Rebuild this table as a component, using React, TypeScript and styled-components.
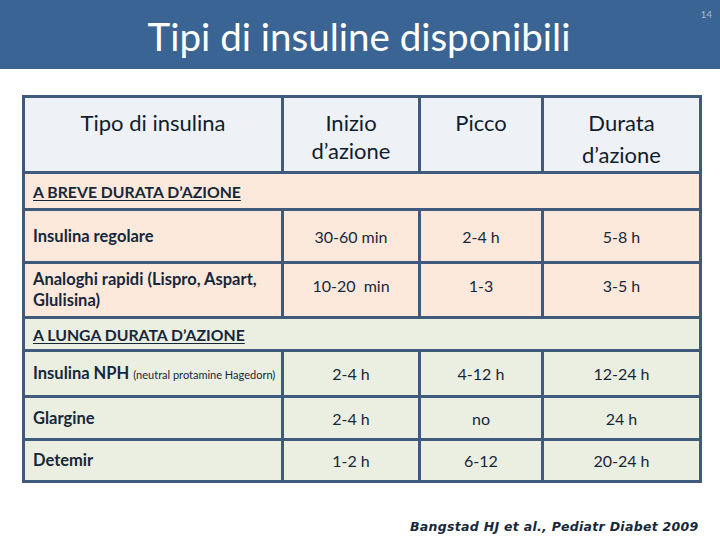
import React from "react";
import styled, { createGlobalStyle } from "styled-components";

const Global = createGlobalStyle`
  html, body { margin: 0; padding: 0; background: #ffffff; }
  body { font-family: Lato, "Open Sans", sans-serif; }
`;

const Page = styled.div`
  width: 720px;
  height: 540px;
  display: flex;
  flex-direction: column;
  background: #ffffff;
  overflow: hidden;
`;

const TitleBar = styled.header`
  position: relative;
  height: 69px;
  background: #3a6494;
  display: flex;
  align-items: center;
  justify-content: center;
`;

const Title = styled.h1`
  margin: 0;
  padding-right: 2px;
  padding-top: 2px;
  font-family: Lato, sans-serif;
  font-weight: 400;
  font-size: 38.5px;
  color: #ffffff;
`;

const SlideNo = styled.span`
  position: absolute;
  top: 8px;
  right: 8px;
  font-family: Lato, sans-serif;
  font-size: 10px;
  color: #a6b8cf;
`;

const TableWrap = styled.div`
  margin: 26px 0 0 22px;
`;

const Table = styled.table`
  width: 677px;
  border-collapse: collapse;
  table-layout: fixed;
  border: 3px solid #3f5a7a;
  color: #17273a;
`;

const HeadCell = styled.th<{ $lh?: number; $pt?: number }>`
  border: 3px solid #3f5a7a;
  background: #eef1f5;
  height: 60px;
  padding: ${(p) => p.$pt ?? 11}px 4px 0;
  vertical-align: top;
  font-family: Lato, sans-serif;
  font-weight: 400;
  font-size: 22px;
  line-height: ${(p) => p.$lh ?? 28}px;
  text-align: center;
  color: #111d2c;
`;

const Row = styled.tr<{ $tone: "peach" | "green"; $h: number }>`
  background: ${(p) => (p.$tone === "peach" ? "#fde9dc" : "#ebefe1")};
  height: ${(p) => p.$h}px;
`;

const SectionCell = styled.td`
  border: 3px solid #3f5a7a;
  padding: 0 8px;
  font-family: Lato, sans-serif;
  font-weight: 700;
  font-size: 15.8px;
  text-decoration: underline;
  text-underline-offset: 2px;
  vertical-align: middle;
`;

const NameCell = styled.td`
  border: 3px solid #3f5a7a;
  padding: 0 8px;
  font-family: Lato, sans-serif;
  font-weight: 700;
  font-size: 16.5px;
  line-height: 21px;
  vertical-align: middle;
  white-space: nowrap;
`;

const Wrap = styled.span`
  white-space: normal;
`;

const Small = styled.span`
  font-size: 11px;
  font-weight: 400;
`;

const ValueCell = styled.td<{ $pb?: number }>`
  border: 3px solid #3f5a7a;
  padding: 0 4px ${(p) => p.$pb ?? 0}px;
  font-family: Lato, sans-serif;
  font-weight: 400;
  font-size: 16px;
  text-align: center;
  vertical-align: middle;
  white-space: pre;
`;

const Citation = styled.p`
  margin: 36px 0 0 410px;
  font-family: "DejaVu Sans", sans-serif;
  font-weight: 700;
  font-style: italic;
  font-size: 12.5px;
  letter-spacing: 0.3px;
  color: #17273a;
`;

type DataRow = { name: React.ReactNode; vals: string[]; h: number; pb?: number };

const brief: DataRow[] = [
  { name: "Insulina regolare", vals: ["30-60 min", "2-4 h", "5-8 h"], h: 53 },
  {
    name: <Wrap>Analoghi rapidi (Lispro, Aspart, Glulisina)</Wrap>,
    vals: ["10-20  min", "1-3", "3-5 h"],
    h: 55,
    pb: 10,
  },
];

const long: DataRow[] = [
  {
    name: (
      <>
        Insulina NPH <Small>(neutral protamine Hagedorn)</Small>
      </>
    ),
    vals: ["2-4 h", "4-12 h", "12-24 h"],
    h: 46,
  },
  { name: "Glargine", vals: ["2-4 h", "no", "24 h"], h: 43 },
  { name: "Detemir", vals: ["1-2 h", "6-12", "20-24 h"], h: 42 },
];

const renderRows = (rows: DataRow[], tone: "peach" | "green") =>
  rows.map((r, i) => (
    <Row key={i} $tone={tone} $h={r.h}>
      <NameCell>{r.name}</NameCell>
      {r.vals.map((v, j) => (
        <ValueCell key={j} $pb={r.pb}>
          {v}
        </ValueCell>
      ))}
    </Row>
  ));

export default function App() {
  return (
    <Page>
      <Global />
      <TitleBar>
        <Title>Tipi di insuline disponibili</Title>
        <SlideNo>14</SlideNo>
      </TitleBar>
      <TableWrap>
        <Table>
          <colgroup>
            <col style={{ width: 259 }} />
            <col style={{ width: 137 }} />
            <col style={{ width: 123 }} />
            <col style={{ width: 158 }} />
          </colgroup>
          <thead>
            <tr>
              <HeadCell>Tipo di insulina</HeadCell>
              <HeadCell>
                Inizio
                <br />
                d’azione
              </HeadCell>
              <HeadCell>Picco</HeadCell>
              <HeadCell $lh={32} $pt={9}>
                Durata
                <br />
                d’azione
              </HeadCell>
            </tr>
          </thead>
          <tbody>
            <Row $tone="peach" $h={37}>
              <SectionCell colSpan={4}>A BREVE DURATA D’AZIONE</SectionCell>
            </Row>
            {renderRows(brief, "peach")}
            <Row $tone="green" $h={33}>
              <SectionCell colSpan={4}>A LUNGA DURATA D’AZIONE</SectionCell>
            </Row>
            {renderRows(long, "green")}
          </tbody>
        </Table>
      </TableWrap>
      <Citation>Bangstad HJ et al., Pediatr Diabet 2009</Citation>
    </Page>
  );
}
